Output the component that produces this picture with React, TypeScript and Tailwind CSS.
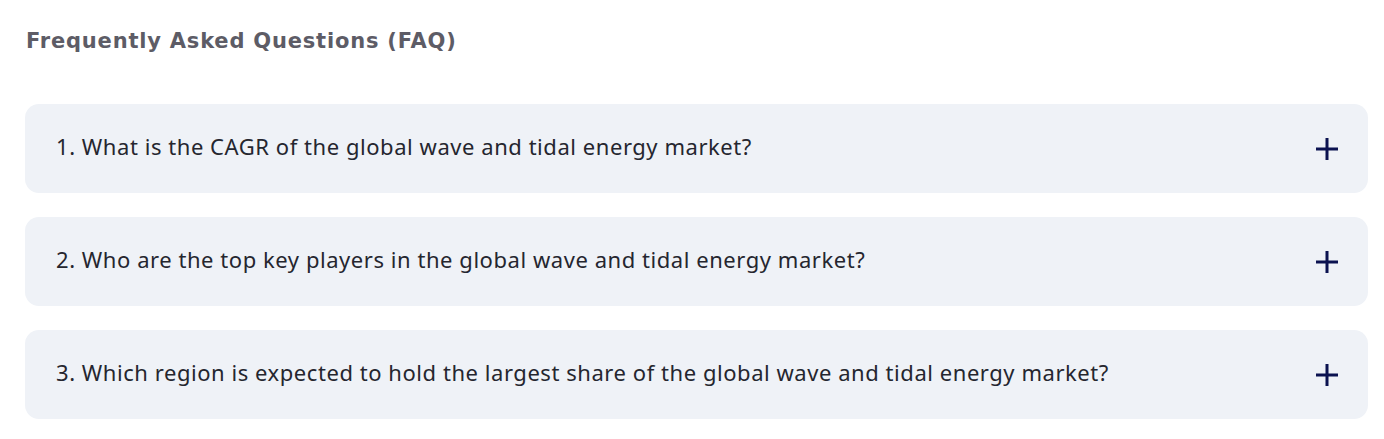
import React from "react";

const questions = [
  "1. What is the CAGR of the global wave and tidal energy market?",
  "2. Who are the top key players in the global wave and tidal energy market?",
  "3. Which region is expected to hold the largest share of the global wave and tidal energy market?",
];

function Plus() {
  return (
    <svg width="22" height="22" viewBox="0 0 22 22" className="shrink-0">
      <path d="M11 0V22M0 11H22" stroke="#0b1250" strokeWidth="3" />
    </svg>
  );
}

export default function App() {
  return (
    <div className="w-[1384px] h-[439px] bg-white px-[25px] pt-[27px]">
      <h2
        className="text-[21px] font-bold text-[#5d5c66] leading-[28px] pl-[1px] tracking-[0.8px]"
        style={{ fontFamily: "'DejaVu Sans', sans-serif" }}
      >
        Frequently Asked Questions (FAQ)
      </h2>
      <div className="mt-[49px] flex flex-col gap-[24px] w-[1343px]">
        {questions.map((q) => (
          <div
            key={q}
            className="h-[89px] rounded-[14px] bg-[#eff2f7] flex items-center justify-between pl-[31px] pr-[30px]"
          >
            <span
              className="text-[22px] text-[#25262f] tracking-[0.55px] leading-[30px] mb-[5px]"
              style={{ fontFamily: "'Noto Sans', sans-serif" }}
            >
              {q}
            </span>
            <Plus />
          </div>
        ))}
      </div>
    </div>
  );
}
